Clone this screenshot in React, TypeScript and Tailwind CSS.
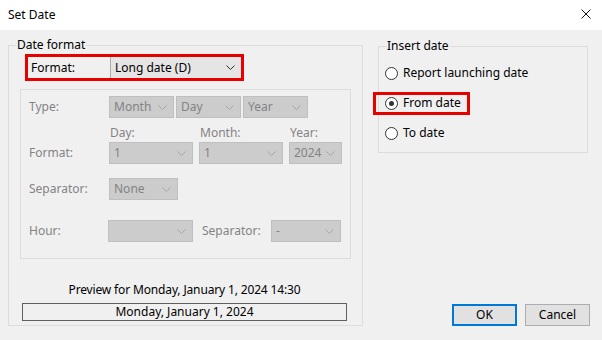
import React from "react";

const FONT = { fontFamily: '"Noto Sans", "Liberation Sans", sans-serif' };

function Chevron({ color }: { color: string }) {
  return (
    <svg width="9" height="5" viewBox="0 0 9 5" className="shrink-0">
      <polyline points="0.5,0.5 4.5,4.5 8.5,0.5" fill="none" stroke={color} strokeWidth="1" />
    </svg>
  );
}

function DSel({ className, text }: { className: string; text?: string }) {
  return (
    <div
      className={
        "flex items-center justify-between h-[22px] border border-[#bfbfbf] bg-[#cccccc] pl-[4px] pr-[6px] text-[#838383] " +
        className
      }
    >
      <span>{text ?? ""}</span>
      <Chevron color="#a6a6a6" />
    </div>
  );
}

function Radio({ checked, label }: { checked?: boolean; label: string }) {
  return (
    <div className="flex items-center h-[30px] pl-[6px]">
      <div className="w-[13px] h-[13px] rounded-full border border-[#333333] bg-white flex items-center justify-center">
        {checked && <div className="w-[5px] h-[5px] rounded-full bg-[#333333]" />}
      </div>
      <span className="ml-[5px] text-black">{label}</span>
    </div>
  );
}

export default function App() {
  return (
    <div
      className="w-[602px] h-[340px] bg-[#f0f0f0] flex flex-col text-[12px] leading-[14px] text-black overflow-hidden"
      style={FONT}
    >
      <div className="h-[30px] bg-white flex items-center justify-between pl-[8px] pr-[11px] shrink-0">
        <span>Set Date</span>
        <svg width="10" height="10" viewBox="0 0 10 10" className="mt-[-2px]">
          <line x1="0.5" y1="0.5" x2="9.5" y2="9.5" stroke="#111" strokeWidth="1" />
          <line x1="9.5" y1="0.5" x2="0.5" y2="9.5" stroke="#111" strokeWidth="1" />
        </svg>
      </div>

      <div className="flex pt-[7px] pl-[8px]">
        {/* Left group */}
        <fieldset className="w-[355px] h-[289px] border border-[#dcdcdc] flex flex-col">
          <legend className="ml-[7px] px-[1px] leading-[16px]">Date format</legend>

          <div className="mt-[1px] ml-[16px] w-[219px] h-[27px] border-[3px] border-[#e60000] flex">
            <div className="w-[82px] pl-[3px] flex items-center">Format:</div>
            <div className="flex-1 flex items-center justify-between bg-[#e5e5e5] border-l border-[#adadad] pl-[4px] pr-[6px]">
              <span>Long date (D)</span>
              <Chevron color="#333333" />
            </div>
          </div>

          <div className="mt-[8px] ml-[11px] w-[331px] h-[170px] border border-[#dcdcdc] pl-[8px] pt-[6px] text-[#838383]">
            <div className="flex items-center">
              <div className="w-[80px]">Type:</div>
              <div className="flex gap-[2px]">
                <DSel className="w-[65px]" text="Month" />
                <DSel className="w-[65px]" text="Day" />
                <DSel className="w-[65px]" text="Year" />
              </div>
            </div>
            <div className="flex mt-[8px] pl-[81px]">
              <div className="w-[90px]">Day:</div>
              <div className="w-[90px]">Month:</div>
              <div>Year:</div>
            </div>
            <div className="flex items-center mt-[2px]">
              <div className="w-[80px]">Format:</div>
              <div className="flex gap-[6px]">
                <DSel className="w-[84px]" text="1" />
                <DSel className="w-[84px]" text="1" />
                <DSel className="w-[53px]" text="2024" />
              </div>
            </div>
            <div className="flex items-center mt-[14px]">
              <div className="w-[80px]">Separator:</div>
              <DSel className="w-[69px]" text="None" />
            </div>
            <div className="flex items-center mt-[20px]">
              <div className="w-[79px]">Hour:</div>
              <DSel className="w-[85px]" />
              <div className="ml-[9px] w-[69px]">Separator:</div>
              <DSel className="w-[70px]" text="-" />
            </div>
          </div>

          <div className="mt-[24px] text-center pr-[2px] tracking-[-0.15px]">Preview for Monday, January 1, 2024 14:30</div>
          <div className="mt-[6px] ml-[13px] w-[325px] h-[18px] border border-[#5f5f5f] flex items-center justify-center">
            Monday, January 1, 2024
          </div>
        </fieldset>

        {/* Right column */}
        <div className="ml-[15px] w-[212px] h-[289px] flex flex-col">
          <fieldset className="mt-[1px] w-[210px] h-[115px] border border-[#dcdcdc]">
            <legend className="ml-[7px] px-[1px] leading-[16px]">Insert date</legend>
            <div className="pt-[4px]">
              <Radio label="Report launching date" />
              <div className="relative">
                <Radio checked label="From date" />
                <div className="absolute left-[-6px] top-[4px] w-[97px] h-[23px] border-[3px] border-[#e60000]" />
              </div>
              <Radio label="To date" />
            </div>
          </fieldset>

          <div className="mt-auto flex justify-end gap-[8px]">
            <button className="w-[65px] h-[22px] border-2 border-[#0078d7] bg-[#e1e1e1] flex items-center justify-center">
              OK
            </button>
            <button className="w-[65px] h-[22px] border border-[#adadad] bg-[#e1e1e1] flex items-center justify-center">
              Cancel
            </button>
          </div>
        </div>
      </div>
    </div>
  );
}
